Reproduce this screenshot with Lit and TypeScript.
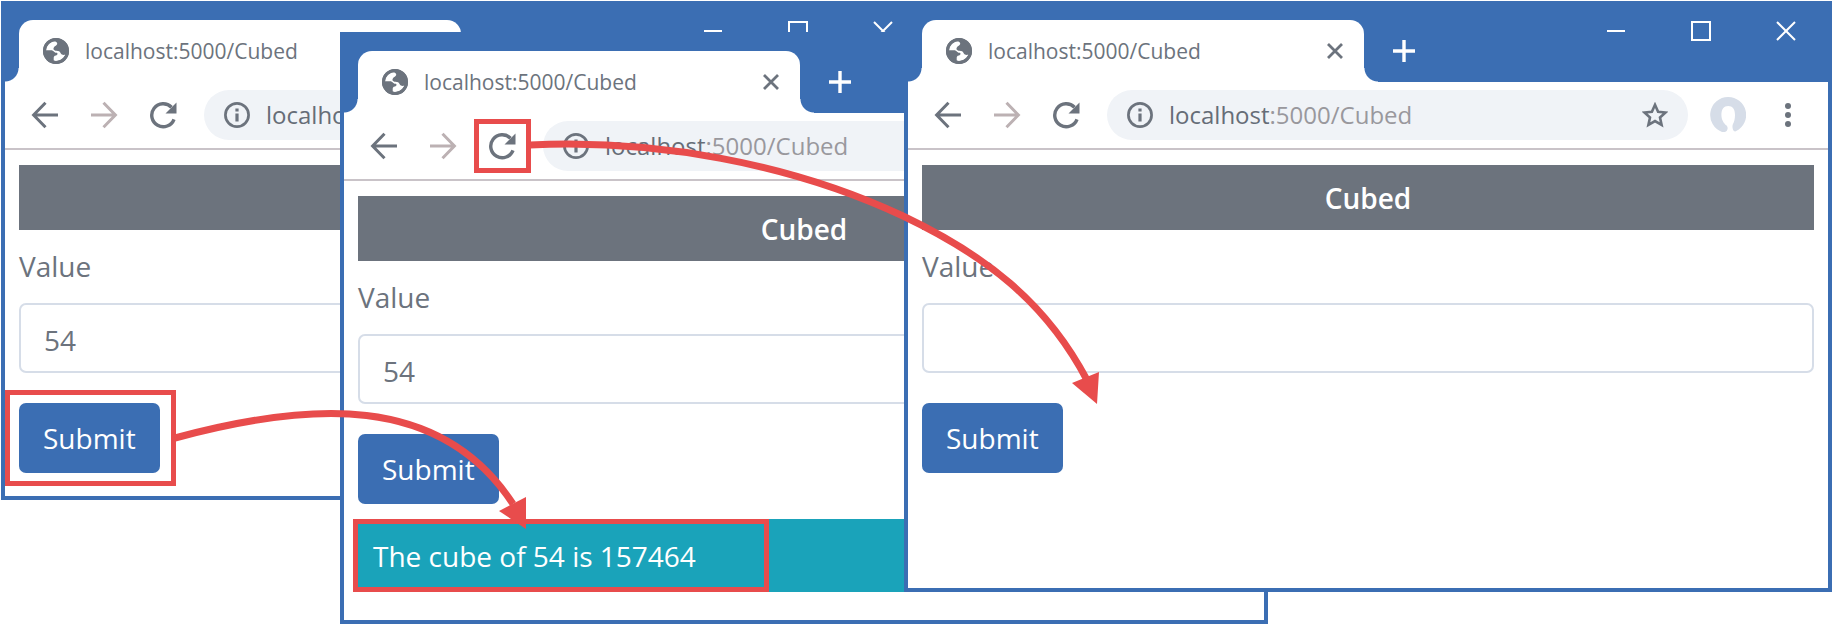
import { LitElement, html, svg, css } from "lit";
import { customElement, property } from "lit/decorators.js";

const globe = html`<svg width="26" height="26" viewBox="0 0 26 26" aria-hidden="true">
  <circle cx="13" cy="13" r="13" fill="#6c737d" />
  <path d="M11 3.200C6.400 4 3 7.800 2.800 12.300h5.300c2.700 0 2.800 2.500 5.300 2.500 1.700 0 1.400 2.400-.4 2.600-2 .3-2.300 1.200-2.300 2.700v2.700c5.500 1 10-1.800 11.700-6.300-1.400.8-3.900.6-4.700-1.200-.9-1.900-1.900-2.400-4.200-2.500-2.500-.2-3.800-1.800-2.500-3.600 1-1.500 2.600-1.300 3.200-3.200.3-1.300-.9-2.600-3.200-2.800z" fill="#fff" />
  <circle cx="13" cy="13" r="11.500" fill="none" stroke="#6c737d" stroke-width="3" />
</svg>`;

const backIcon = html`<svg width="28" height="28" viewBox="0 0 28 28" fill="none" stroke="currentColor" stroke-width="3" aria-hidden="true">
  <path d="M27 14H3M14.500 1.800 2.600 14l11.900 12.200" />
</svg>`;

const forwardIcon = html`<svg width="28" height="28" viewBox="0 0 28 28" fill="none" stroke="currentColor" stroke-width="3" aria-hidden="true">
  <path d="M1 14h24M13.500 1.800 25.400 14 13.500 26.200" />
</svg>`;

const reloadIcon = html`<svg width="28" height="28" viewBox="0 0 28 28" aria-hidden="true">
  <path d="M25 18.300A11.500 11.500 0 1 1 22.500 6.200" fill="none" stroke="currentColor" stroke-width="3.400" />
  <path d="M27.500 1.500v11H16.500z" fill="currentColor" />
</svg>`;

const infoIcon = html`<svg width="26" height="26" viewBox="0 0 26 26" aria-hidden="true">
  <circle cx="13" cy="13" r="11.600" fill="none" stroke="#6c737d" stroke-width="2.700" />
  <path d="M11.400 11.400h3.200v8.200h-3.200zM11.400 6.400h3.200v3h-3.200z" fill="#6c737d" />
</svg>`;

const starIcon = html`<svg width="26" height="26" viewBox="0 0 26 26" aria-hidden="true">
  <path d="M13 2.800l3.100 6.900 7.500.8-5.600 5 1.600 7.400L13 19.100l-6.600 3.800L8 15.500l-5.600-5 7.500-.8z" fill="none" stroke="currentColor" stroke-width="2.600" />
</svg>`;

const avatarIcon = html`<svg width="36" height="36" viewBox="0 0 36 36" aria-hidden="true">
  <path d="M18 0a18 18 0 0 0-6 34.900c2.500.6 4.700-.2 5.400-2.400.5-1.500.2-2.800-.8-4-3-2-5.200-6.200-5.200-10.500 0-6 2.500-9 6.800-9s6.800 3 6.800 9c0 4-.9 7-1.900 8.700-.8 1.400-.8 3.600-.3 5.200.5 1.700 1.700 3.100 3.400 2.200A18 18 0 0 0 18 0z" fill="#d6dde8" />
</svg>`;

const menuIcon = html`<svg width="8" height="26" viewBox="0 0 8 26" fill="currentColor" aria-hidden="true">
  <circle cx="4" cy="4" r="3" /><circle cx="4" cy="13" r="3" /><circle cx="4" cy="22" r="3" />
</svg>`;

const tabCloseIcon = html`<svg width="16" height="16" viewBox="0 0 16 16" stroke="currentColor" stroke-width="2.800" aria-hidden="true">
  <path d="M1 1l14 14M15 1 1 15" />
</svg>`;

const plusIcon = html`<svg width="22" height="22" viewBox="0 0 22 22" stroke="currentColor" stroke-width="3.400" aria-hidden="true">
  <path d="M11 0v22M0 11h22" />
</svg>`;

const controlIcon = (path: unknown) => html`<svg width="20" height="20" viewBox="0 0 20 20" fill="none" stroke="currentColor" stroke-width="2" aria-hidden="true">${path}</svg>`;

@customElement("browser-window")
export class BrowserWindow extends LitElement {
  @property() value = "";
  @property() message = "";

  static styles = css`
    :host {
      display: flex;
      flex-direction: column;
      box-sizing: border-box;
      border: 4px solid #3b6eb3;
      background: #fff;
      color: #6c737d;
      font-family: "Open Sans", "Noto Sans", sans-serif;
      font-size: 28px;
      line-height: 42px;
    }
    button {
      display: flex;
      align-items: center;
      justify-content: center;
      margin: 0;
      padding: 0;
      border: 0;
      background: none;
      color: inherit;
      font: inherit;
    }
    svg {
      display: block;
      flex: none;
    }
    .titlebar {
      display: flex;
      flex: none;
      align-items: flex-end;
      height: 77px;
      padding-left: 14px;
      background: #3b6eb3;
      color: #fff;
    }
    .tab {
      position: relative;
      display: flex;
      align-items: center;
      box-sizing: border-box;
      flex: 0 1 442px;
      height: 62px;
      padding: 0 14px 0 24px;
      gap: 16px;
      border-radius: 14px 14px 0 0;
      background: #fff;
      color: #6c737d;
      font-size: 21px;
    }
    .tab::before,
    .tab::after {
      content: "";
      position: absolute;
      bottom: 0;
      width: 14px;
      height: 14px;
    }
    .tab::before {
      right: 100%;
      background: radial-gradient(circle at 0 0, transparent 13px, #fff 14px);
    }
    .tab::after {
      left: 100%;
      background: radial-gradient(circle at 100% 0, transparent 13px, #fff 14px);
    }
    .tab-title {
      flex: 1;
    }
    .tab-close {
      width: 30px;
      height: 30px;
    }
    .new-tab {
      width: 40px;
      height: 62px;
      margin-left: 20px;
    }
    .controls {
      display: flex;
      align-self: flex-start;
      margin-left: auto;
    }
    .control {
      width: 85px;
      height: 52px;
    }
    .toolbar {
      display: flex;
      flex: none;
      align-items: center;
      height: 66px;
      padding: 0 10px;
      border-bottom: 2px solid #c9c3c8;
    }
    .nav {
      width: 59px;
      height: 50px;
    }
    .nav[disabled] {
      color: #bcb1b3;
    }
    .address {
      display: flex;
      align-items: center;
      flex: 1;
      height: 50px;
      margin: 0 10px 0 12px;
      padding: 0 20px;
      gap: 16px;
      border-radius: 25px;
      background: #f0f3f7;
      font-size: 24px;
    }
    .url {
      flex: 1;
    }
    .host {
      color: #666d77;
    }
    .path {
      color: #99989d;
    }
    .tool {
      width: 60px;
      height: 50px;
    }
    .page {
      padding: 15px 14px 0;
    }
    .heading {
      margin: 0 0 15px;
      padding: 12px 0 11px;
      background: #6c737d;
      color: #fff;
      font-size: 28px;
      font-weight: 600;
      line-height: 42px;
      text-align: center;
    }
    .label {
      display: block;
      margin-bottom: 16px;
    }
    .field {
      display: block;
      box-sizing: border-box;
      width: 100%;
      height: 70px;
      padding: 4px 23px 0;
      border: 2px solid #d6dde8;
      border-radius: 7px;
      background: #fff;
      color: inherit;
      font: inherit;
      outline: 0;
    }
    .submit {
      margin-top: 30px;
      padding: 14px 24px;
      border-radius: 7px;
      background: #3b6eb3;
      color: #fff;
    }
    .message {
      margin-top: 15px;
      padding: 16px 15px 15px;
      background: #1aa3ba;
      color: #fff;
    }
  `;

  render() {
    return html`
      <div class="titlebar">
        <div class="tab">
          ${globe}
          <span class="tab-title">localhost:5000/Cubed</span>
          <button class="tab-close" type="button" aria-label="Close tab">${tabCloseIcon}</button>
        </div>
        <button class="new-tab" type="button" aria-label="New tab">${plusIcon}</button>
        <div class="controls">
          <button class="control" type="button" aria-label="Minimize">${controlIcon(svg`<path d="M1 10h18" />`)}</button>
          <button class="control" type="button" aria-label="Maximize">${controlIcon(svg`<path d="M1 1h18v18H1z" />`)}</button>
          <button class="control" type="button" aria-label="Close">${controlIcon(svg`<path d="M1 1l18 18M19 1 1 19" />`)}</button>
        </div>
      </div>
      <div class="toolbar">
        <button class="nav" type="button" aria-label="Back">${backIcon}</button>
        <button class="nav" type="button" aria-label="Forward" disabled>${forwardIcon}</button>
        <button class="nav" type="button" aria-label="Reload">${reloadIcon}</button>
        <div class="address">
          ${infoIcon}
          <span class="url"><span class="host">localhost</span><span class="path">:5000/Cubed</span></span>
          <button type="button" aria-label="Bookmark">${starIcon}</button>
        </div>
        <button class="tool" type="button" aria-label="Profile">${avatarIcon}</button>
        <button class="tool" type="button" aria-label="Menu">${menuIcon}</button>
      </div>
      <div class="page">
        <h1 class="heading">Cubed</h1>
        <label class="label" for="value">Value</label>
        <input class="field" id="value" type="text" .value=${this.value} />
        <button class="submit" type="submit">Submit</button>
        ${this.message ? html`<div class="message">${this.message}</div>` : null}
      </div>
    `;
  }
}

@customElement("app-root")
export class AppRoot extends LitElement {
  static styles = css`
    :host {
      display: block;
      position: relative;
      min-height: 625px;
      overflow: hidden;
      background: #fff;
    }
    browser-window {
      position: absolute;
      width: 928px;
    }
    .before {
      left: 1px;
      top: 1px;
      height: 499px;
    }
    .posted {
      left: 340px;
      top: 32px;
      height: 592px;
    }
    .reloaded {
      left: 904px;
      top: 1px;
      height: 591px;
    }
    .notes {
      position: absolute;
      left: 0;
      top: 0;
      pointer-events: none;
    }
  `;

  render() {
    return html`
      <browser-window class="before" value="54"></browser-window>
      <browser-window class="posted" value="54" message="The cube of 54 is 157464"></browser-window>
      <browser-window class="reloaded"></browser-window>
      <svg class="notes" width="1833" height="625" viewBox="0 0 1833 625" fill="none" stroke="#e84c4c" aria-hidden="true">
        <g stroke-width="5">
          <rect x="7.500" y="392.500" width="166" height="91" />
          <rect x="476.500" y="121.500" width="52" height="49" />
          <rect x="355.500" y="521.500" width="411" height="68" />
        </g>
        <g stroke-width="7">
          <path d="M175 438C308 402 440 392 513 504" />
          <path d="M530 145C655 139 790 163 903 216C985 255 1046 302 1087 380" />
        </g>
        <g fill="#e84c4c" stroke="none">
          <path d="M526 529 499 511 526 497z" />
          <path d="M1097 404 1072 383 1099 372z" />
        </g>
      </svg>
    `;
  }
}
